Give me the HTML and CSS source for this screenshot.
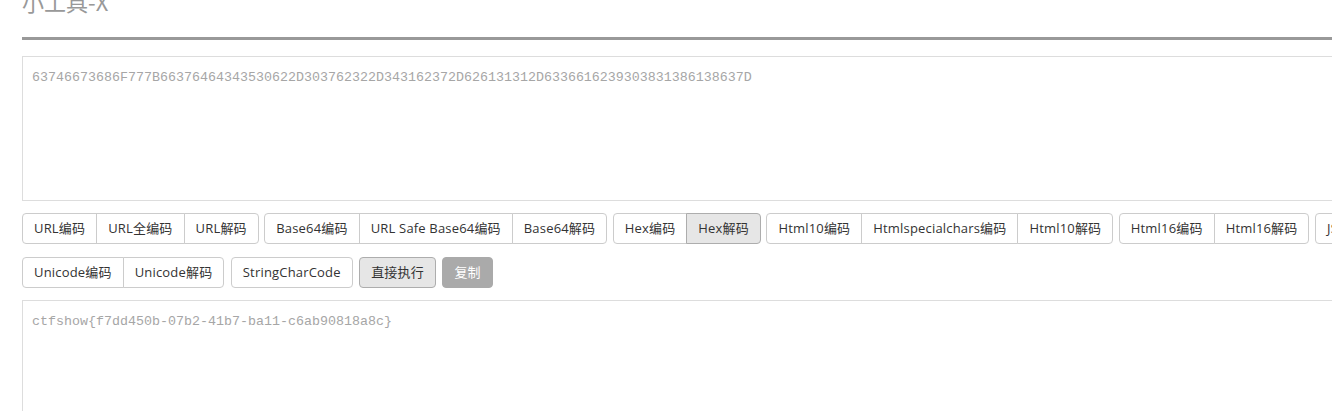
FILE: index.html
```html
<!DOCTYPE html>
<html lang="zh-CN">
<head>
<meta charset="utf-8">
<title>小工具-X</title>
<link rel="stylesheet" href="styles.css">
</head>
<body>
<div class="page">
  <h3 class="title">小工具-X</h3>
  <div class="field input-area">63746673686F777B66376464343530622D303762322D343162372D626131312D6336616239303831386138637D</div>
  <div class="toolbar first">
    <div class="btn-group">
      <button class="btn">URL编码</button><button class="btn">URL全编码</button><button class="btn">URL解码</button>
    </div>
    <div class="btn-group">
      <button class="btn">Base64编码</button><button class="btn">URL Safe Base64编码</button><button class="btn">Base64解码</button>
    </div>
    <div class="btn-group">
      <button class="btn">Hex编码</button><button class="btn active">Hex解码</button>
    </div>
    <div class="btn-group">
      <button class="btn">Html10编码</button><button class="btn">Htmlspecialchars编码</button><button class="btn">Html10解码</button>
    </div>
    <div class="btn-group">
      <button class="btn">Html16编码</button><button class="btn">Html16解码</button>
    </div>
    <div class="btn-group">
      <button class="btn">JS编码</button><button class="btn">JS解码</button>
    </div>
  </div>
  <div class="toolbar second">
    <div class="btn-group">
      <button class="btn">Unicode编码</button><button class="btn">Unicode解码</button>
    </div>
    <div class="btn-group">
      <button class="btn">StringCharCode</button>
    </div>
    <button class="btn solo active">直接执行</button>
    <button class="btn solo copy">复制</button>
  </div>
  <div class="field output-area">ctfshow{f7dd450b-07b2-41b7-ba11-c6ab90818a8c}</div>
</div>
</body>
</html>
```

FILE: styles.css
```css
html, body {
  margin: 0;
  padding: 0;
  overflow: hidden;
  background: #fff;
}

.page {
  width: 1500px;
  padding-left: 22px;
  font-family: "Open Sans", "Noto Sans CJK SC", sans-serif;
}

.title {
  margin: -14px 0 0 0;
  font-size: 22px;
  line-height: 30px;
  font-weight: normal;
  color: #999;
  padding-bottom: 21px;
  border-bottom: 3px solid #999;
  font-family: "Noto Sans CJK SC", sans-serif;
}

.field {
  border: 1px solid #ddd;
  box-sizing: border-box;
  padding: 13px 9px 10px;
  font-family: "Liberation Mono", monospace;
  font-size: 13.33px;
  line-height: 16px;
  color: #a6a6a6;
  white-space: pre;
}

.input-area {
  margin-top: 16px;
  height: 145px;
}

.output-area {
  margin-top: 12px;
  height: 140px;
}

.toolbar {
  display: flex;
  gap: 5.5px;
  white-space: nowrap;
}

.toolbar.first {
  margin-top: 12px;
}

.toolbar.second {
  margin-top: 13px;
  gap: 6.5px;
}

.btn-group {
  display: flex;
}

.btn {
  font-family: "Open Sans", "Noto Sans CJK SC", sans-serif;
  font-size: 13px;
  line-height: 17px;
  letter-spacing: 0.18px;
  padding: 6px 11px;
  color: #333;
  background: #fff;
  border: 1px solid #ccc;
  border-radius: 4px;
  cursor: pointer;
}

.btn-group .btn {
  border-radius: 0;
}

.btn-group .btn + .btn {
  margin-left: -1px;
}

.btn-group .btn:first-child {
  border-radius: 4px 0 0 4px;
}

.btn-group .btn:last-child {
  border-radius: 0 4px 4px 0;
}

.btn-group .btn:only-child {
  border-radius: 4px;
}

.btn.active {
  background: #e6e6e6;
  border-color: #adadad;
}

.btn.copy {
  background: #aaa;
  border-color: #aaa;
  color: #fff;
}
```
